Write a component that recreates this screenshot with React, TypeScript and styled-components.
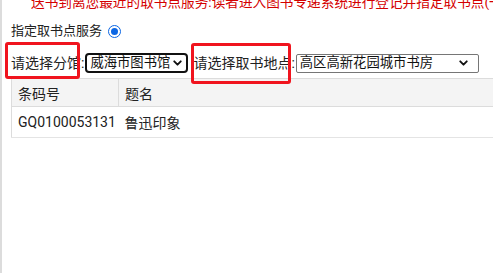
import React from 'react'
import styled, {createGlobalStyle} from 'styled-components'
import {ChevronDown} from 'lucide-react'

const GlobalStyle = createGlobalStyle`
  html, body {
    margin: 0;
    padding: 0;
    background: #fff;
  }
  body {
    font-family: Roboto, "Noto Sans CJK SC", sans-serif;
    font-size: 14px;
    color: #222;
  }
`

const Page = styled.div`
  min-height: 100vh;
  border-left: 2px solid #dcdcdc;
  overflow: hidden;
  box-sizing: border-box;
`

const Notice = styled.div`
  margin-top: -8px;
  padding-left: 29px;
  color: #d40000;
  font-size: 13.65px;
  line-height: 20px;
  white-space: nowrap;
`

const Content = styled.div`
  padding: 9px 0 0 9px;
`

const ServiceRow = styled.div`
  display: flex;
  align-items: center;
  gap: 4px;
  font-size: 13px;
  line-height: 20px;
  height: 20px;
`

const Radio = styled.span`
  width: 11px;
  height: 11px;
  border-radius: 50%;
  border: 1px solid #0b66e4;
  background: #fff;
  display: inline-flex;
  align-items: center;
  justify-content: center;
  margin-left: 2px;
  &::after {
    content: '';
    width: 7px;
    height: 7px;
    border-radius: 50%;
    background: #0b66e4;
  }
`

const FilterRow = styled.div`
  display: flex;
  align-items: center;
  margin-top: 12px;
  height: 20px;
`

type Mark = {l: number; r: number; t: number; b: number}

const Label = styled.span<{$mark?: Mark}>`
  position: relative;
  white-space: nowrap;
  line-height: 20px;
  &::after {
    content: '';
    display: ${p => (p.$mark ? 'block' : 'none')};
    position: absolute;
    left: ${p => p.$mark?.l ?? 0}px;
    right: ${p => p.$mark?.r ?? 0}px;
    top: ${p => p.$mark?.t ?? 0}px;
    bottom: ${p => p.$mark?.b ?? 0}px;
    border: 3px solid #f0141e;
    border-radius: 3px;
    pointer-events: none;
  }
`

const SelectBox = styled.div<{$w: number; $focus?: boolean}>`
  position: relative;
  display: flex;
  align-items: center;
  box-sizing: border-box;
  width: ${p => p.$w}px;
  height: ${p => (p.$focus ? 20 : 19)}px;
  margin: 0 5px 0 1px;
  padding-left: 3px;
  border: ${p => (p.$focus ? '2px solid #111' : '1px solid #767676')};
  border-radius: ${p => (p.$focus ? 4 : 2)}px;
  background: #fff;
  white-space: nowrap;
  overflow: hidden;
  font-size: 13.33px;
  line-height: 16px;
  color: #111;
  svg {
    position: absolute;
    right: ${p => (p.$focus ? 2 : 8)}px;
    top: 50%;
    transform: translateY(-50%);
  }
`

const Table = styled.table`
  margin-top: 5px;
  width: calc(100% + 40px);
  table-layout: fixed;
  border-collapse: collapse;
  border-left: 1px solid #dcdcdc;
`

const HeadCell = styled.th<{$w?: number}>`
  background: #f4f4f4;
  border-top: 1px solid #dcdcdc;
  border-right: 1px solid #dcdcdc;
  border-bottom: 1px solid #dcdcdc;
  height: 28px;
  padding: 0 6px;
  text-align: left;
  font-weight: normal;
  width: ${p => (p.$w ? `${p.$w}px` : 'auto')};
  box-sizing: border-box;
`

const Cell = styled.td`
  height: 30px;
  padding: 0 6px;
  border-bottom: 1px solid #e4e4e4;
  white-space: nowrap;
  overflow: hidden;
`

export default function App() {
  return (
    <>
      <GlobalStyle />
      <Page>
        <Notice>
          送书到离您最近的取书点服务:读者进入图书专递系统进行登记并指定取书点(一般为一周内送达)
        </Notice>
        <Content>
          <ServiceRow>
            指定取书点服务
            <Radio />
          </ServiceRow>
          <FilterRow>
            <Label $mark={{l: -6, r: 4, t: -11, b: -6}}>请选择分馆:</Label>
            <SelectBox $w={103} $focus>
              威海市图书馆
              <ChevronDown size={13} strokeWidth={3.5} />
            </SelectBox>
            <Label $mark={{l: -2, r: 4, t: -10, b: -11}}>请选择取书地点:</Label>
            <SelectBox $w={183}>
              高区高新花园城市书房
              <ChevronDown size={13} strokeWidth={3.5} />
            </SelectBox>
          </FilterRow>
          <Table>
            <thead>
              <tr>
                <HeadCell $w={107}>条码号</HeadCell>
                <HeadCell>题名</HeadCell>
              </tr>
            </thead>
            <tbody>
              <tr>
                <Cell>GQ0100053131</Cell>
                <Cell>鲁迅印象</Cell>
              </tr>
            </tbody>
          </Table>
        </Content>
      </Page>
    </>
  )
}
